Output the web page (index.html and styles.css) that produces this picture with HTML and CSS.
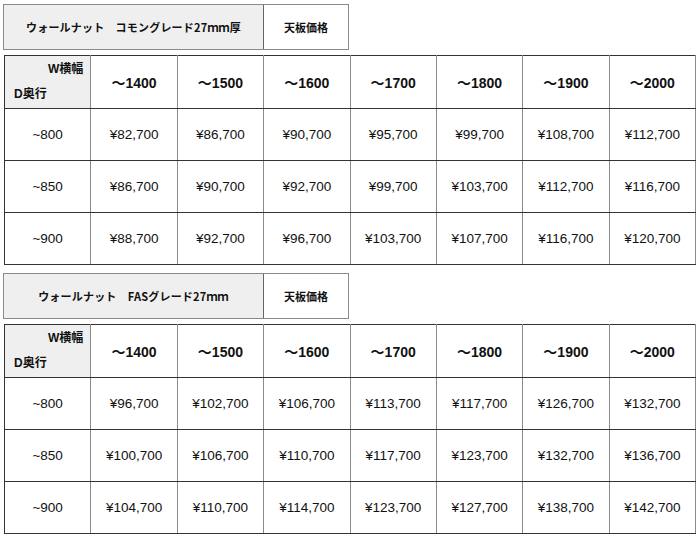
FILE: index.html
```html
<!DOCTYPE html>
<html lang="ja">
<head>
<meta charset="utf-8">
<link rel="stylesheet" href="styles.css">
</head>
<body>
<div class="page">
  <div class="title-box">
    <div class="title-name">ウォールナット　コモングレード27ｍｍ厚</div>
    <div class="title-label">天板価格</div>
  </div>
  <table class="price">
    <tr class="head">
      <td class="corner"><div class="w">W横幅</div><div class="d">D奥行</div></td>
      <td>～1400</td><td>～1500</td><td>～1600</td><td>～1700</td><td>～1800</td><td>～1900</td><td>～2000</td>
    </tr>
    <tr>
      <td class="depth">~800</td>
      <td>¥82,700</td><td>¥86,700</td><td>¥90,700</td><td>¥95,700</td><td>¥99,700</td><td>¥108,700</td><td>¥112,700</td>
    </tr>
    <tr>
      <td class="depth">~850</td>
      <td>¥86,700</td><td>¥90,700</td><td>¥92,700</td><td>¥99,700</td><td>¥103,700</td><td>¥112,700</td><td>¥116,700</td>
    </tr>
    <tr>
      <td class="depth">~900</td>
      <td>¥88,700</td><td>¥92,700</td><td>¥96,700</td><td>¥103,700</td><td>¥107,700</td><td>¥116,700</td><td>¥120,700</td>
    </tr>
  </table>

  <div class="title-box second">
    <div class="title-name">ウォールナット　FASグレード27ｍｍ</div>
    <div class="title-label">天板価格</div>
  </div>
  <table class="price">
    <tr class="head">
      <td class="corner"><div class="w">W横幅</div><div class="d">D奥行</div></td>
      <td>～1400</td><td>～1500</td><td>～1600</td><td>～1700</td><td>～1800</td><td>～1900</td><td>～2000</td>
    </tr>
    <tr>
      <td class="depth">~800</td>
      <td>¥96,700</td><td>¥102,700</td><td>¥106,700</td><td>¥113,700</td><td>¥117,700</td><td>¥126,700</td><td>¥132,700</td>
    </tr>
    <tr>
      <td class="depth">~850</td>
      <td>¥100,700</td><td>¥106,700</td><td>¥110,700</td><td>¥117,700</td><td>¥123,700</td><td>¥132,700</td><td>¥136,700</td>
    </tr>
    <tr>
      <td class="depth">~900</td>
      <td>¥104,700</td><td>¥110,700</td><td>¥114,700</td><td>¥123,700</td><td>¥127,700</td><td>¥138,700</td><td>¥142,700</td>
    </tr>
  </table>
</div>
</body>
</html>
```

FILE: styles.css
```css
html, body {
  margin: 0;
  padding: 0;
  background: #fff;
}
body {
  font-family: "Liberation Sans", "Noto Sans CJK JP", sans-serif;
  color: #111;
}
.page {
  padding: 4px 0 0 3px;
  display: flex;
  flex-direction: column;
  align-items: flex-start;
}
.title-box {
  display: flex;
  width: 346px;
  height: 46px;
  box-sizing: border-box;
  border: 1px solid #8a8a8a;
  background: #efefef;
  font-family: "Noto Sans CJK JP", sans-serif;
  font-weight: bold;
  font-size: 11px;
}
.title-box.second {
  margin-top: 8px;
}
.title-name {
  width: 259px;
  display: flex;
  align-items: center;
  justify-content: center;
  letter-spacing: 0.2px;
}
.title-label {
  flex: 1;
  border-left: 1px solid #666;
  background: #fff;
  display: flex;
  align-items: center;
  justify-content: center;
}
.price {
  margin-top: 5px;
  margin-left: 1px;
  width: 692px;
  table-layout: fixed;
  border-collapse: collapse;
}
.price td {
  border-top: 1px solid #333;
  border-bottom: 1px solid #333;
  border-left: 1px solid #8a8a8a;
  border-right: 1px solid #8a8a8a;
  text-align: center;
  vertical-align: middle;
  padding: 0;
  height: 51px;
  font-size: 13.5px;
}
.price td:first-child {
  border-left-color: #333;
}
.price tr.head td {
  height: 52px;
  font-family: "Liberation Sans", "Noto Sans CJK JP", sans-serif;
  font-weight: bold;
  font-size: 14px;
}
.price tr.head td.corner {
  background: #efefef;
  font-size: 12px;
  font-family: "Liberation Sans", "Noto Sans CJK JP", sans-serif;
  padding: 0 7px 0 9px;
}
.corner .w {
  text-align: right;
  line-height: 25px;
}
.corner .d {
  text-align: left;
  line-height: 25px;
}
```
